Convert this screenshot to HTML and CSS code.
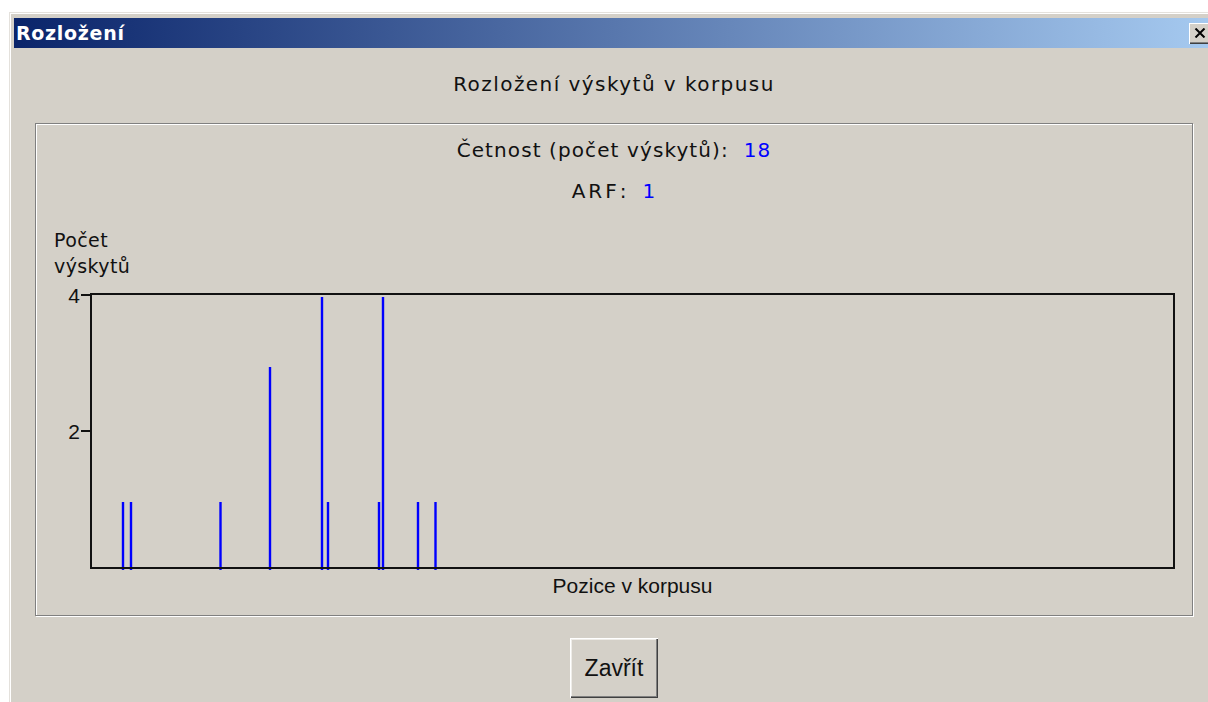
FILE: index.html
```html
<!DOCTYPE html>
<html lang="cs">
<head>
<meta charset="utf-8">
<title>Rozložení</title>
<link rel="stylesheet" href="styles.css">
</head>
<body>
<div class="window">
  <div class="titlebar">
    <span class="title">Rozložení</span>
    <button class="close" type="button" aria-label="Zavřít">
      <svg width="12" height="10" viewBox="0 0 12 10">
        <path d="M1.5 0.5 L10.5 9.5 M10.5 0.5 L1.5 9.5" stroke="#000" stroke-width="2"/>
      </svg>
    </button>
  </div>
  <div class="content">
    <h1 class="heading">Rozložení výskytů v korpusu</h1>
    <section class="group">
      <p class="stat">Četnost (počet výskytů):&nbsp; <span class="value">18</span></p>
      <p class="stat stat-arf"><span class="caps">ARF</span>:&nbsp; <span class="value">1</span></p>
      <div class="ylabel">Počet<br>výskytů</div>
      <svg class="plot" width="1156" height="295" viewBox="0 0 1156 295">
        <!-- axis ticks and their labels -->
        <g class="axis">
          <line x1="45" y1="16" x2="54" y2="16"/>
          <line x1="45" y1="152" x2="54" y2="152"/>
        </g>
        <text class="tick" x="44" y="24" text-anchor="end">4</text>
        <text class="tick" x="44" y="160" text-anchor="end">2</text>
        <!-- occurrences per corpus position -->
        <g class="bars">
          <line x1="87" y1="223" x2="87" y2="291"/>
          <line x1="95" y1="223" x2="95" y2="291"/>
          <line x1="184.5" y1="223" x2="184.5" y2="291"/>
          <line x1="234" y1="88" x2="234" y2="291"/>
          <line x1="286" y1="18" x2="286" y2="291"/>
          <line x1="292" y1="223" x2="292" y2="291"/>
          <line x1="343" y1="223" x2="343" y2="291"/>
          <line x1="347" y1="18" x2="347" y2="291"/>
          <line x1="382" y1="223" x2="382" y2="291"/>
          <line x1="399.5" y1="223" x2="399.5" y2="291"/>
        </g>
        <rect class="frame" x="55" y="15" width="1083" height="274"/>
      </svg>
      <div class="xlabel">Pozice v korpusu</div>
    </section>
    <div class="actions">
      <button class="btn" type="button">Zavřít</button>
    </div>
  </div>
</div>
</body>
</html>
```
FILE: styles.css
```css
html, body {
  margin: 0;
  padding: 0;
  background: #ffffff;
  overflow: hidden;
  height: 702px;
}

body {
  font-family: "DejaVu Sans", Verdana, sans-serif;
  color: #000;
}

.window {
  margin: 12px 0 0 9px;
  width: 1205px;
  height: 720px;
  background: #d4d0c8;
  border-top: 1px solid #e4e1dc;
  border-left: 1px solid #e4e1dc;
  box-shadow: inset 1px 1px 0 #ffffff;
  padding: 5px 0 0 4px;
  box-sizing: border-box;
}

.titlebar {
  height: 30px;
  width: 1200px;
  display: flex;
  align-items: center;
  justify-content: space-between;
  background: linear-gradient(to right, #0a246a 0%, #a6caf0 100%);
  box-sizing: border-box;
  padding: 0 3px 0 2px;
}

.title {
  color: #fff;
  font-family: "DejaVu Sans", Verdana, sans-serif;
  font-weight: bold;
  font-size: 19px;
  letter-spacing: 0.7px;
  line-height: 30px;
}

.close {
  width: 22px;
  height: 21px;
  margin: 0;
  padding: 0;
  display: flex;
  align-items: center;
  justify-content: center;
  background: #d4d0c8;
  border: none;
  box-shadow: inset 1px 1px 0 #ffffff, inset -1px -1px 0 #404040, inset -2px -2px 0 #808080;
}

.content {
  width: 1200px;
  display: flex;
  flex-direction: column;
  align-items: center;
}

/* dialog text: wide bitmap-like sans */
.heading,
.stat,
.ylabel {
  font-family: "DejaVu Sans", Verdana, sans-serif;
  font-weight: normal;
  color: #111;
}

.heading {
  margin: 24px 0 0 0;
  font-size: 20px;
  letter-spacing: 1.45px;
  line-height: 24px;
}

.group {
  margin-top: 27px;
  width: 1158px;
  height: 493px;
  box-sizing: border-box;
  border: 1px solid #808080;
  box-shadow: inset 1px 1px 0 #ffffff, 1px 1px 0 #ffffff;
  padding-top: 14px;
}

.stat {
  margin: 0;
  text-align: center;
  font-size: 20px;
  letter-spacing: 1.1px;
  line-height: 24px;
}

.stat-arf {
  margin-top: 17px;
}

.caps {
  letter-spacing: 3px;
}

.value {
  color: #0000ff;
}

.ylabel {
  margin: 24px 0 0 18px;
  font-size: 19px;
  letter-spacing: 0.4px;
  line-height: 26px;
}

.plot {
  display: block;
}

.axis line {
  stroke: #111;
  stroke-width: 2;
}

.tick {
  font-family: "Liberation Sans", Arial, sans-serif;
  font-size: 21px;
  fill: #111;
}

.bars line {
  stroke: #0000ff;
  stroke-width: 2.4;
}

.frame {
  fill: none;
  stroke: #111;
  stroke-width: 2;
}

.xlabel {
  padding: 0 17px 0 54px;
  text-align: center;
  font-family: "Liberation Sans", Arial, sans-serif;
  font-size: 21px;
  line-height: 24px;
  color: #111;
}

.actions {
  margin-top: 22px;
}

.btn {
  width: 88px;
  height: 60px;
  font-family: "Liberation Sans", Arial, sans-serif;
  font-size: 23px;
  color: #111;
  background: #d4d0c8;
  border: none;
  padding: 0;
  box-shadow: inset 1px 1px 0 #ffffff, inset -1px -1px 0 #404040, inset -2px -2px 0 #808080, inset 2px 2px 0 #eeece8;
}
```
